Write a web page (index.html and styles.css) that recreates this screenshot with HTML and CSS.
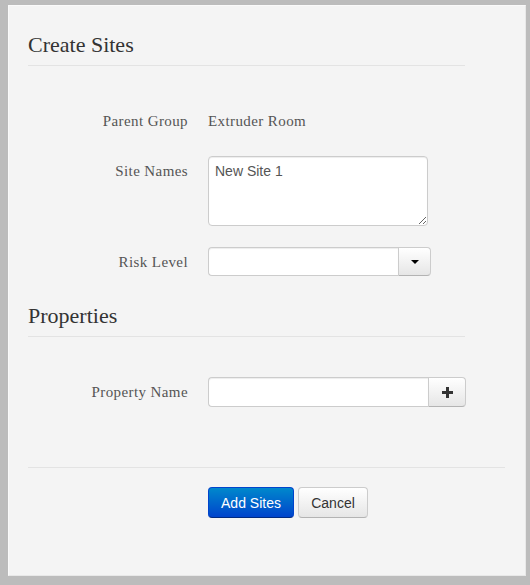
FILE: index.html
```html
<!DOCTYPE html>
<html>
<head>
<meta charset="utf-8">
<link rel="stylesheet" href="styles.css">
</head>
<body>
<div class="panel">
  <h2 class="heading">Create Sites</h2>
  <div class="rule"></div>
  <div class="row row-parent">
    <div class="label">Parent Group</div>
    <div class="value">Extruder Room</div>
  </div>
  <div class="row row-names">
    <div class="label label-top">Site Names</div>
    <textarea class="textarea">New Site 1</textarea>
  </div>
  <div class="row row-risk">
    <div class="label">Risk Level</div>
    <div class="combo combo-risk">
      <div class="field"></div>
      <div class="addon"><span class="caret"></span></div>
    </div>
  </div>
  <h2 class="heading heading-props">Properties</h2>
  <div class="rule"></div>
  <div class="row row-prop">
    <div class="label">Property Name</div>
    <div class="combo combo-prop">
      <div class="field"></div>
      <div class="addon addon-plus"><svg width="11" height="11" viewBox="0 0 11 11"><path d="M4 0h3v4h4v3H7v4H4V7H0V4h4z" fill="#333"/></svg></div>
    </div>
  </div>
  <div class="rule rule-wide"></div>
  <div class="actions">
    <button class="btn btn-primary">Add Sites</button>
    <button class="btn btn-default">Cancel</button>
  </div>
</div>
</body>
</html>
```

FILE: styles.css
```css
html, body {
  margin: 0;
  padding: 0;
}
body {
  background: #bcbcbc;
  padding: 5px 4px 9px 8px;
  width: 530px;
  height: 585px;
  box-sizing: border-box;
}
.panel {
  width: 518px;
  height: 571px;
  box-sizing: border-box;
  background: #f4f4f4;
  border-top: 1px solid #fafafa;
  border-left: 1px solid #fafafa;
  border-right: 1px solid #e8e8e8;
  border-bottom: 1px solid #e8e8e8;
  padding: 27px 20px 0 19px;
  font-family: "Liberation Serif", Georgia, serif;
}
.heading {
  margin: 0;
  font-weight: normal;
  font-size: 22px;
  line-height: 24px;
  color: #333;
  font-family: "Liberation Serif", Georgia, serif;
}
.heading-props {
  margin-top: 28px;
}
.rule {
  width: 437px;
  height: 1px;
  background: #e3e3e3;
  margin-top: 8px;
}
.rule-wide {
  width: 477px;
  margin-top: 60px;
}
.row {
  display: flex;
  align-items: center;
  gap: 20px;
}
.row-parent {
  margin-top: 45px;
  height: 20px;
}
.row-names {
  margin-top: 25px;
  align-items: flex-start;
}
.row-risk {
  margin-top: 21px;
}
.row-prop {
  margin-top: 40px;
}
.label {
  width: 160px;
  text-align: right;
  font-size: 15px;
  letter-spacing: 0.4px;
  line-height: 20px;
  color: #555;
  font-family: "Liberation Serif", Georgia, serif;
}
.label-top {
  padding-top: 5px;
}
.value {
  font-size: 15px;
  letter-spacing: 0.4px;
  line-height: 20px;
  color: #555;
  font-family: "Liberation Serif", Georgia, serif;
}
.textarea {
  width: 220px;
  height: 70px;
  box-sizing: border-box;
  margin: 0;
  border: 1px solid #ccc;
  border-radius: 4px;
  background: #fff;
  padding: 4px 6px;
  font-family: "Liberation Sans", Arial, sans-serif;
  font-size: 14px;
  line-height: 20px;
  color: #555;
  resize: both;
  box-shadow: inset 0 1px 1px rgba(0,0,0,0.075);
}
.combo {
  display: flex;
  height: 29px;
  box-sizing: border-box;
}
.combo-risk {
  width: 223px;
}
.combo-prop {
  width: 258px;
  height: 30px;
}
.field {
  flex: 1;
  background: #fff;
  border: 1px solid #ccc;
  border-right: none;
  border-radius: 4px 0 0 4px;
  box-shadow: inset 0 1px 1px rgba(0,0,0,0.075);
}
.addon {
  width: 33px;
  box-sizing: border-box;
  border: 1px solid #ccc;
  border-bottom-color: #b3b3b3;
  border-radius: 0 4px 4px 0;
  background: linear-gradient(#ffffff, #e6e6e6);
  display: flex;
  align-items: center;
  justify-content: center;
}
.addon-plus {
  width: 38px;
}
.caret {
  width: 0;
  height: 0;
  border-left: 4px solid transparent;
  border-right: 4px solid transparent;
  border-top: 4px solid #000;
}
.actions {
  display: flex;
  gap: 4px;
  margin-top: 19px;
  padding-left: 180px;
}
.btn {
  margin: 0;
  height: 31px;
  box-sizing: border-box;
  border-radius: 4px;
  font-family: "Liberation Sans", Arial, sans-serif;
  font-size: 14px;
  line-height: 20px;
  padding: 4px 12px;
  cursor: pointer;
}
.btn-primary {
  width: 86px;
  color: #fff;
  background: linear-gradient(#0088cc, #0044cc);
  border: 1px solid #0044cc;
  border-bottom-color: #002a80;
}
.btn-default {
  width: 70px;
  color: #333;
  background: linear-gradient(#ffffff, #e6e6e6);
  border: 1px solid #cccccc;
  border-bottom-color: #b3b3b3;
}
```
